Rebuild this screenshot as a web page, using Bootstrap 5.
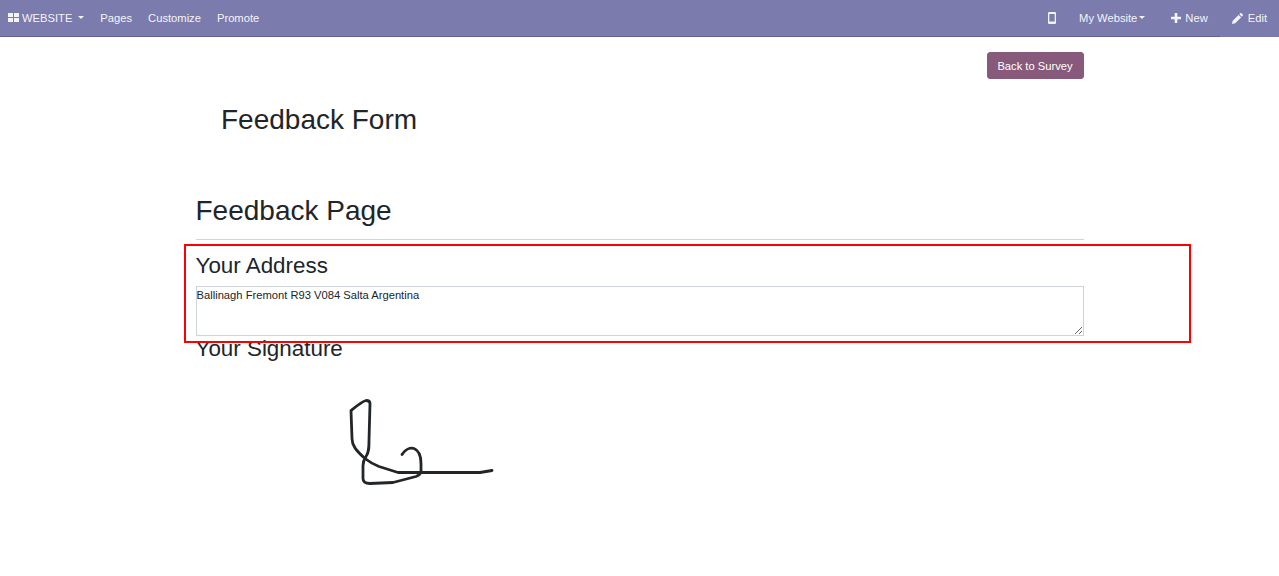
<!DOCTYPE html>
<html lang="en">
<head>
  <meta charset="UTF-8" />
  <meta name="viewport" content="width=device-width,initial-scale=1" />
  <title>Feedback Form</title>
  <link href="https://cdn.jsdelivr.net/npm/bootstrap@5.3.0/dist/css/bootstrap.min.css" rel="stylesheet" />
  <style>
    body {
      font-family: "Liberation Sans", Arial, sans-serif;
      color: #212529;
      background: #fff;
      overflow: hidden;
    }
    .site-bar {
      height: 37px;
      padding: 0;
      background: #7c7bad;
      border-bottom: 1px solid #5f5e97;
      font-size: 11.2px;
      line-height: 1;
    }
    .site-bar a {
      color: #fff;
      text-decoration: none;
      opacity: .92;
    }
    .bar-label { padding-top: 2px; }
    .bar-caret {
      display: inline-block;
      width: 0;
      height: 0;
      border-top: 3.5px solid #fff;
      border-left: 3.5px solid transparent;
      border-right: 3.5px solid transparent;
    }
    .nav-left-link { margin-left: 16px; }
    .bar-edit {
      align-self: stretch;
      height: 37px;
      margin-left: 12px;
      padding-left: 12px;
      padding-right: 12px;
      background: #7c7bad;
    }
    .survey-wrap {
      width: 888px;
      margin: 0 auto;
    }
    .btn-survey {
      background: #875a7b;
      border: 1px solid #875a7b;
      color: #fff;
      font-size: 11.2px;
      line-height: 1.5;
      width: 97px;
      height: 27px;
      padding: 1px 0 0;
      border-radius: 3px;
    }
    .btn-survey:hover { background: #75496a; color: #fff; }
    .form-title {
      font-size: 28px;
      line-height: 34px;
      font-weight: 400;
      margin: 24px 0 0 25.5px;
    }
    .page-title {
      font-size: 28px;
      line-height: 34px;
      font-weight: 400;
      margin: 57px 0 11px;
    }
    .page-rule {
      margin: 0;
      border-top: 1px solid #ced4da;
      opacity: 1;
    }
    .question-title {
      font-size: 22.4px;
      line-height: 26px;
      font-weight: 400;
      margin: 13px 0 0;
    }
    .address-box {
      display: block;
      width: 100%;
      height: 50px;
      margin-top: 7px;
      padding: 2px 0;
      border: 1px solid #ced4da;
      font-size: 11.2px;
      line-height: 13px;
      color: #212529;
      outline: 0;
      font-family: "Liberation Sans", Arial, sans-serif;
    }
    .signature-title { margin-top: 0; }
    .signature-img { display: block; }
    .mark-box {
      position: absolute;
      left: 184px;
      top: 244px;
      width: 1007px;
      height: 99px;
      border: 2px solid #f00;
      pointer-events: none;
    }
  </style>
</head>
<body>
  <nav class="navbar site-bar d-flex justify-content-between align-items-center flex-nowrap">
    <div class="d-flex align-items-center">
      <a href="#" class="d-flex align-items-center ms-2">
        <svg width="11" height="9" viewBox="0 0 11 9" fill="#fff"><rect width="5" height="4"/><rect x="6" width="5" height="4"/><rect y="5" width="5" height="4"/><rect x="6" y="5" width="5" height="4"/></svg>
        <span class="bar-label" style="margin-left:3px">WEBSITE</span>
        <span class="bar-caret" style="margin-left:6px;margin-right:-1px"></span>
      </a>
      <a href="#" class="bar-label" style="margin-left:17px">Pages</a>
      <a href="#" class="bar-label nav-left-link">Customize</a>
      <a href="#" class="bar-label nav-left-link">Promote</a>
    </div>
    <div class="d-flex align-items-center">
      <a href="#" class="d-flex">
        <svg width="8" height="12" viewBox="0 0 8 12"><path fill="#fff" fill-rule="evenodd" d="M1.200 0h5.600A1.200 1.200 0 0 1 8 1.200v9.600A1.200 1.200 0 0 1 6.800 12H1.200A1.200 1.200 0 0 1 0 10.800V1.200A1.200 1.200 0 0 1 1.200 0zM1.300 2v7.500h5.400V2z"/></svg>
      </a>
      <a href="#" class="d-flex align-items-center" style="margin-left:23px"><span class="bar-label">My Website</span><span class="bar-caret" style="margin-left:2px;margin-right:-1px"></span></a>
      <a href="#" class="d-flex align-items-center" style="margin-left:27px">
        <svg width="10" height="10" viewBox="0 0 10 10" fill="#fff"><path d="M3.700 0h2.600v3.700H10v2.600H6.300V10H3.700V6.300H0V3.700h3.700z"/></svg>
        <span class="bar-label" style="margin-left:4px">New</span>
      </a>
      <a href="#" class="bar-edit d-flex align-items-center">
        <svg width="11" height="11" viewBox="0 0 11 11" fill="#fff"><path d="M0 11l.7-3.200L6.600 1.900l2.500 2.500L3.200 10.300zM7.300 1.200L8.200.3a.9.9 0 0 1 1.300 0l1.200 1.200a.9.9 0 0 1 0 1.300l-.9.900z"/></svg>
        <span class="bar-label" style="margin-left:5px">Edit</span>
      </a>
    </div>
  </nav>

  <main class="survey-wrap">
    <div class="d-flex justify-content-end" style="padding-top:15px">
      <a href="#" class="btn btn-survey d-flex align-items-center justify-content-center">Back to Survey</a>
    </div>
    <h1 class="form-title">Feedback Form</h1>
    <h2 class="page-title">Feedback Page</h2>
    <hr class="page-rule" />
    <h3 class="question-title">Your Address</h3>
    <textarea class="address-box">Ballinagh Fremont R93 V084 Salta Argentina</textarea>
    <h3 class="question-title signature-title">Your Signature</h3>
    <svg class="signature-img" width="888" height="140" viewBox="196 361.500 888 140">
      <path fill="none" stroke="#232629" stroke-width="2.800" stroke-linejoin="round" stroke-linecap="round"
        d="M402 454C405 449 410 447 414 448C419 450 421 456 421 463L421 470C421 473 419 475 416 476L393 482L370 483C366 483 363 482 363 478L363 465C363 461 364 459 366 456C369 452 369 447 369 440L370 403C370 401 368 400 366 400C362 401 356 406 351 410L352 438C352 445 356 450 365 458C370 462 374 464 379 466L398 472L480 472L492 470"/>
    </svg>
  </main>

  <div class="mark-box"></div>

  <script src="https://cdn.jsdelivr.net/npm/bootstrap@5.3.0/dist/js/bootstrap.bundle.min.js"></script>
</body>
</html>
